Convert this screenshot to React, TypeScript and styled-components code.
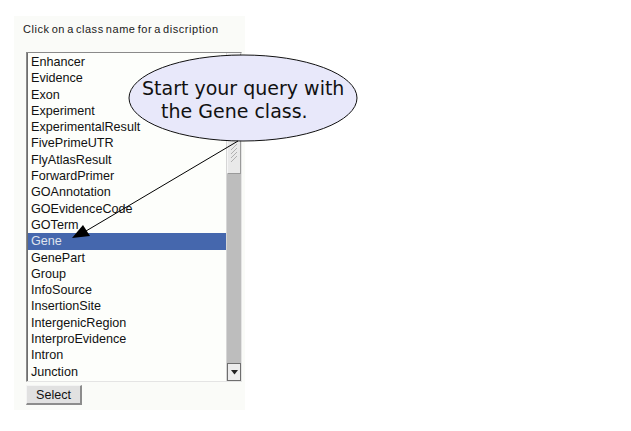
import React from "react";
import styled, { createGlobalStyle } from "styled-components";

const Global = createGlobalStyle`
  html, body { margin: 0; padding: 0; background: #ffffff; }
  body { font-family: "Liberation Sans", Arial, sans-serif; }
`;

const Page = styled.div`
  position: relative;
  width: 631px;
  height: 431px;
  overflow: hidden;
  background: #ffffff;
`;

const Panel = styled.div`
  position: relative;
  margin: 16px 0 0 14px;
  width: 231px;
  height: 394px;
  background: #fafbf8;
  padding: 0 0 0 9px;
  box-sizing: border-box;
  display: flex;
  flex-direction: column;
`;

const Caption = styled.div`
  font-family: "Liberation Sans", Arial, sans-serif;
  font-size: 11px;
  letter-spacing: 0.55px;
  word-spacing: -1.5px;
  color: #1a1a1a;
  margin-top: 7px;
  height: 13px;
  line-height: 13px;
`;

const ListBox = styled.div`
  margin: 16px 0 0 3px;
  width: 216px;
  height: 330px;
  box-sizing: border-box;
  border-style: solid;
  border-width: 1px;
  border-color: #8a8a8a #e4e4e4 #e4e4e4 #8a8a8a;
  background: #fdfefb;
  display: flex;
`;

const Options = styled.div`
  flex: 1;
  display: flex;
  flex-direction: column;
  padding-top: 1px;
  border-left: 1px solid #6e6e6e;
`;

const Option = styled.div<{ $selected?: boolean }>`
  height: 16.3px;
  line-height: 16.3px;
  padding-left: 3px;
  font-family: "Liberation Sans", Arial, sans-serif;
  font-size: 12.6px;
  white-space: nowrap;
  color: ${(p) => (p.$selected ? "#dfe3ee" : "#111111")};
  background: ${(p) => (p.$selected ? "#4567ad" : "transparent")};
`;

const Scrollbar = styled.div`
  width: 14px;
  display: flex;
  flex-direction: column;
  background: #bdbdbd;
  border-left: 1px solid #d6d6d6;
`;

const Thumb = styled.div`
  height: 121px;
  box-sizing: border-box;
  background: #e9e9e9;
  border: 1px solid #9a9a9a;
  border-top-color: #f6f6f6;
  border-left-color: #f6f6f6;
  display: flex;
  align-items: flex-end;
  justify-content: center;
  padding-bottom: 8px;
`;

const Track = styled.div`
  flex: 1;
`;

const ArrowButton = styled.div`
  height: 18px;
  box-sizing: border-box;
  background: #ececec;
  border: 1px solid #6e6e6e;
  display: flex;
  align-items: center;
  justify-content: center;
`;

const Button = styled.button`
  margin: 3px 0 0 3px;
  width: 56px;
  height: 20px;
  padding: 0;
  box-sizing: border-box;
  font-family: "Liberation Sans", Arial, sans-serif;
  font-size: 12.6px;
  color: #111;
  background: #e1e1e1;
  border-style: solid;
  border-width: 1px 2px 2px 1px;
  border-color: #f4f4f4 #8c8c8c #8c8c8c #f4f4f4;
`;

const Overlay = styled.svg`
  position: absolute;
  left: 0;
  top: 0;
  pointer-events: none;
`;

const BubbleText = styled.text`
  font-family: "DejaVu Sans", sans-serif;
  font-size: 19px;
  fill: #111;
`;

const items = [
  "Enhancer",
  "Evidence",
  "Exon",
  "Experiment",
  "ExperimentalResult",
  "FivePrimeUTR",
  "FlyAtlasResult",
  "ForwardPrimer",
  "GOAnnotation",
  "GOEvidenceCode",
  "GOTerm",
  "Gene",
  "GenePart",
  "Group",
  "InfoSource",
  "InsertionSite",
  "IntergenicRegion",
  "InterproEvidence",
  "Intron",
  "Junction",
];

export default function App() {
  return (
    <Page>
      <Global />
      <Panel>
        <Caption>Click on a class name for a discription</Caption>
        <ListBox>
          <Options>
            {items.map((it) => (
              <Option key={it} $selected={it === "Gene"}>
                {it}
              </Option>
            ))}
          </Options>
          <Scrollbar>
            <Thumb>
              <svg width="8" height="22" viewBox="0 0 8 22">
                <path d="M1 7 L7 1 M1 11 L7 5 M1 15 L7 9 M1 19 L7 13" stroke="#b0b0b0" strokeWidth="1" fill="none" />
              </svg>
            </Thumb>
            <Track />
            <ArrowButton>
              <svg width="7" height="5" viewBox="0 0 7 5">
                <path d="M0 0 L7 0 L3.5 4.5 Z" fill="#222" />
              </svg>
            </ArrowButton>
          </Scrollbar>
        </ListBox>
        <Button>Select</Button>
      </Panel>
      <Overlay width="631" height="431" viewBox="0 0 631 431">
        <ellipse cx="243" cy="98" rx="114" ry="43" fill="#e8e8fa" stroke="#111" strokeWidth="1" />
        <BubbleText x="142" y="95">Start your query with</BubbleText>
        <BubbleText x="161" y="118">the Gene class.</BubbleText>
        <line x1="238" y1="141" x2="86" y2="231" stroke="#000" strokeWidth="1" />
        <path d="M72 238 L83 225 L90 236 Z" fill="#000" />
      </Overlay>
    </Page>
  );
}
